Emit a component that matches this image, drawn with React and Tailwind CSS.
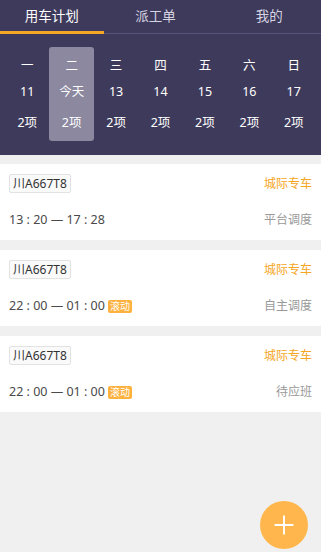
import { Plus } from "lucide-react";

const days = [
  { w: "一", d: "11", n: "2项" },
  { w: "二", d: "今天", n: "2项", active: true },
  { w: "三", d: "13", n: "2项" },
  { w: "四", d: "14", n: "2项" },
  { w: "五", d: "15", n: "2项" },
  { w: "六", d: "16", n: "2项" },
  { w: "日", d: "17", n: "2项" },
];

const orders = [
  { plate: "川A667T8", type: "城际专车", time: "13 : 20 — 17 : 28", mode: "平台调度" },
  { plate: "川A667T8", type: "城际专车", time: "22 : 00 — 01 : 00", tag: true, mode: "自主调度" },
  { plate: "川A667T8", type: "城际专车", time: "22 : 00 — 01 : 00", tag: true, mode: "待应班" },
];

export default function App() {
  return (
    <div
      className="relative h-[552px] w-full overflow-hidden bg-[#f0f0f0]"
      style={{ fontFamily: '"Noto Sans", "Noto Sans CJK SC", sans-serif' }}
    >
      {/* Header */}
      <div className="bg-[#3e3a5b] pb-[14px]">
        <div className="flex h-[34px] border-b border-[#57537a]">
          <div className="relative flex flex-1 items-center justify-center text-[13.5px] text-white">
            用车计划
            <div className="absolute bottom-[-1px] left-0 h-[3px] w-full bg-[#f5a623]" />
          </div>
          <div className="flex flex-1 items-center justify-center text-[13.5px] text-[#d6d4e2]">
            派工单
          </div>
          <div className="flex flex-1 items-center justify-center pl-[10px] text-[13.5px] text-[#d6d4e2]">
            我的
          </div>
        </div>
        <div className="mt-[13px] grid grid-cols-7 px-[5px]">
          {days.map((x, i) => (
            <div
              key={i}
              className={`flex h-[94px] flex-col items-center pt-[8px] text-[12.5px] text-white ${
                x.active ? "rounded-[3px] bg-[#8b889f]" : ""
              }`}
            >
              <div className="h-[22px] leading-[22px]">{x.w}</div>
              <div className="mt-[4px] h-[22px] leading-[22px]">{x.d}</div>
              <div className="mt-[9px] h-[22px] leading-[22px]">{x.n}</div>
            </div>
          ))}
        </div>
      </div>

      {/* Orders */}
      <div className="mt-[9px] flex flex-col gap-[10px]">
        {orders.map((o, i) => (
          <div key={i} className="h-[76px] bg-white px-[9px] pt-[10px]">
            <div className="flex items-center justify-between">
              <div className="flex h-[19px] items-center rounded-[2px] border border-[#e2e2e2] bg-[#fafafa] px-[3px] text-[12px] text-[#333]">
                {o.plate}
              </div>
              <div className="text-[12px] text-[#f5a623]">{o.type}</div>
            </div>
            <div className="mt-[18px] flex items-center justify-between">
              <div className="flex items-center text-[12.5px] text-[#4a4a4a]">
                {o.time}
                {o.tag && (
                  <span className="ml-[3px] rounded-[2px] bg-[#fdb13f] px-[2px] text-[10px] leading-[13px] text-white">
                    滚动
                  </span>
                )}
              </div>
              <div className="text-[12px] text-[#999]">{o.mode}</div>
            </div>
          </div>
        ))}
      </div>

      {/* FAB */}
      <button className="absolute left-[260px] top-[501px] flex h-[48px] w-[48px] items-center justify-center rounded-full bg-[#ffb74d]">
        <Plus className="h-[30px] w-[30px] text-white" strokeWidth={1.5} />
      </button>
    </div>
  );
}
